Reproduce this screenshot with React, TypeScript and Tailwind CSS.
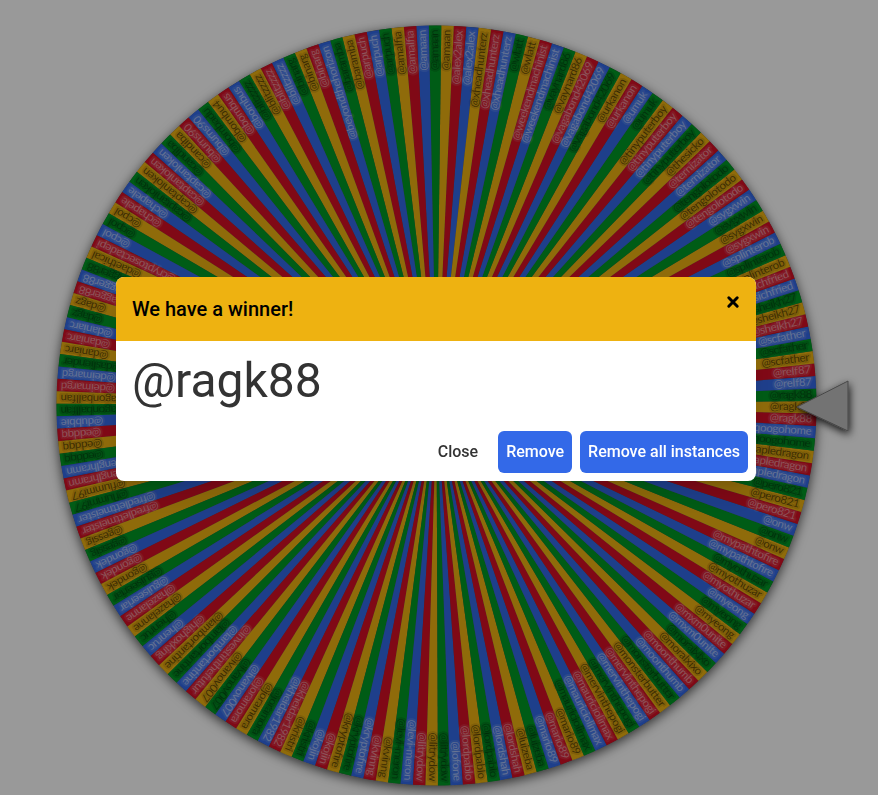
import { useState } from 'react';

type Tone = 'blue' | 'red' | 'yellow' | 'green';

const TONES: Tone[] = ['blue', 'red', 'yellow', 'green'];

const toneClass: Record<Tone, { slice: string; label: string }> = {
  blue: { slice: 'fill-[#3369e8]', label: 'fill-white/50 stroke-white/10' },
  red: { slice: 'fill-[#d50f25]', label: 'fill-white/45 stroke-white/10' },
  yellow: { slice: 'fill-[#eeb211]', label: 'fill-black/55 stroke-black/10' },
  green: { slice: 'fill-[#009925]', label: 'fill-black/35 stroke-black/15' },
};

// [name, number of entries], in wheel order
const entries: [string, number][] = [
  ['@alex2alex', 2],
  ['@amaan', 3],
  ['@amalfia', 2],
  ['@arpuch', 3],
  ['@baramba', 2],
  ['@beyondthehorizon', 1],
  ['@binarg', 3],
  ['@blitzzzz', 4],
  ['@bombus', 2],
  ['@bombu4', 1],
  ['@bombadu', 1],
  ['@burns90', 2],
  ['@candiba', 2],
  ['@captanloken', 4],
  ['@chapele', 2],
  ['@cpol', 3],
  ['@cryptosectadepi', 1],
  ['@daethical', 1],
  ['@dagger88', 3],
  ['@dagz', 2],
  ['@daniarc', 3],
  ['@dasliender', 1],
  ['@deimargd', 2],
  ['@dragonballfan', 2],
  ['@dubbie', 1],
  ['@eddqq', 3],
  ['@fenglhramn', 2],
  ['@flummi97', 2],
  ['@fredlettmeister', 2],
  ['@gessig', 2],
  ['@gondek', 3],
  ['@guiseeriar', 2],
  ['@hazelanne', 2],
  ['@henruc', 2],
  ['@highoxking', 1],
  ['@iambortantine', 3],
  ['@investinthefutur', 1],
  ['@ivanov007', 3],
  ['@joramora', 3],
  ['@kheidar1982', 2],
  ['@kristri', 2],
  ['@kojin', 2],
  ['@kryptofire', 3],
  ['@kvinng', 2],
  ['@levi-meron', 2],
  ['@litrydow', 3],
  ['@lofone', 1],
  ['@lordpablo', 3],
  ['@lordshah', 2],
  ['@luizeba', 2],
  ['@mario89', 3],
  ['@mauriciolimax', 3],
  ['@mervinthepogi', 4],
  ['@monsterbutter', 2],
  ['@moonthumb', 2],
  ['@moralxixo', 2],
  ['@mxm0unite', 2],
  ['@myeong', 3],
  ['@myothuzar', 3],
  ['@mypathtofire', 2],
  ['@onw', 3],
  ['@pero821', 3],
  ['@papledragon', 3],
  ['@qoogohome', 2],
  ['@ragk88', 3],
  ['@relf87', 2],
  ['@scfather', 3],
  ['@sheikh27', 3],
  ['@sichfried', 2],
  ['@splinterob', 3],
  ['@sygxwin', 4],
  ['@tengolotodo', 3],
  ['@ternizator', 2],
  ['@thesicko', 1],
  ['@tinyputerboy', 4],
  ['@umuk', 2],
  ['@urkanon', 2],
  ['@vagabond42069', 3],
  ['@vaynard86', 2],
  ['@weekendmachinist', 2],
  ['@wlatt', 2],
  ['@xheadhunterz', 3],
];

const names = entries.flatMap(([name, count]) => Array<string>(count).fill(name));

const RADIUS = 380;
const STEP = 360 / names.length;
const WINNER_INDEX = 146;
const START_ANGLE = 0.25 + WINNER_INDEX * STEP;

const half = (STEP / 2) * (Math.PI / 180);
const sliceX = RADIUS * Math.cos(half);
const sliceY = RADIUS * Math.sin(half);
const SLICE_PATH = `M0 0L${sliceX} ${-sliceY}A${RADIUS} ${RADIUS} 0 0 1 ${sliceX} ${sliceY}Z`;

function Wheel() {
  return (
    <svg viewBox="0 0 878 795" className="block h-auto w-full" role="img" aria-label="Name wheel">
      <defs>
        <filter id="wheel-shadow" x="-10%" y="-10%" width="120%" height="120%">
          <feDropShadow dx="0" dy="3" stdDeviation="6" floodOpacity="0.7" />
        </filter>
        <filter id="pointer-shadow" x="-40%" y="-40%" width="180%" height="190%">
          <feDropShadow dx="1" dy="3" stdDeviation="4" floodOpacity="0.9" />
        </filter>
      </defs>
      <g transform="translate(436.5 405.5)">
        <circle r={RADIUS} className="fill-[#555]" filter="url(#wheel-shadow)" />
        {names.map((name, i) => {
          const tone = toneClass[TONES[i % 4]];
          return (
            <g key={i} transform={`rotate(${START_ANGLE - i * STEP})`}>
              <path d={SLICE_PATH} className={tone.slice} />
              <text
                x={RADIUS - 4}
                y="3"
                textAnchor="end"
                strokeWidth="4"
                strokeLinejoin="round"
                className={`font-[Lato,sans-serif] text-[11px] ${tone.label}`}
              >
                {name}
              </text>
            </g>
          );
        })}
      </g>
      <path
        d="M797 407L848 381V431Z"
        className="fill-[#c0c0c0] stroke-[#777]"
        filter="url(#pointer-shadow)"
      />
    </svg>
  );
}

function WinnerDialog({ winner, onClose }: { winner: string; onClose: () => void }) {
  return (
    <div className="fixed inset-0 flex items-center justify-center bg-black/40 pr-1.5 pb-[38px]">
      <section
        role="dialog"
        aria-modal="true"
        aria-labelledby="winner-title"
        className="w-full max-w-[640px] overflow-hidden rounded-lg bg-white shadow-xl"
      >
        <header className="flex items-start justify-between bg-[#eeb211] py-4 pr-3.5 pl-4 text-black">
          <h2 id="winner-title" className="text-xl leading-8 font-medium">
            We have a winner!
          </h2>
          <button type="button" aria-label="Dismiss" onClick={onClose} className="p-0.5">
            <svg viewBox="0 0 14 14" className="size-3.5">
              <path
                d="M2.8 2.8l8.4 8.4M11.2 2.8l-8.4 8.4"
                fill="none"
                stroke="currentColor"
                strokeWidth="3"
                strokeLinecap="round"
              />
            </svg>
          </button>
        </header>
        <p className="px-4 pt-1 pb-3.5 text-5xl leading-[72px] text-[#333]">{winner}</p>
        <footer className="flex justify-end gap-2 px-2 pb-2 text-base leading-[26px] font-medium">
          <button type="button" onClick={onClose} className="mr-3 py-2 text-[#333]">
            Close
          </button>
          <button type="button" onClick={onClose} className="rounded-md bg-[#3369e8] px-2 py-2 text-white">
            Remove
          </button>
          <button type="button" onClick={onClose} className="rounded-md bg-[#3369e8] px-2 py-2 text-white">
            Remove all instances
          </button>
        </footer>
      </section>
    </div>
  );
}

export default function App() {
  const [open, setOpen] = useState(true);

  return (
    <main className="min-h-screen overflow-hidden bg-white font-[Roboto,sans-serif]">
      <Wheel />
      {open && <WinnerDialog winner={names[WINNER_INDEX]} onClose={() => setOpen(false)} />}
    </main>
  );
}
